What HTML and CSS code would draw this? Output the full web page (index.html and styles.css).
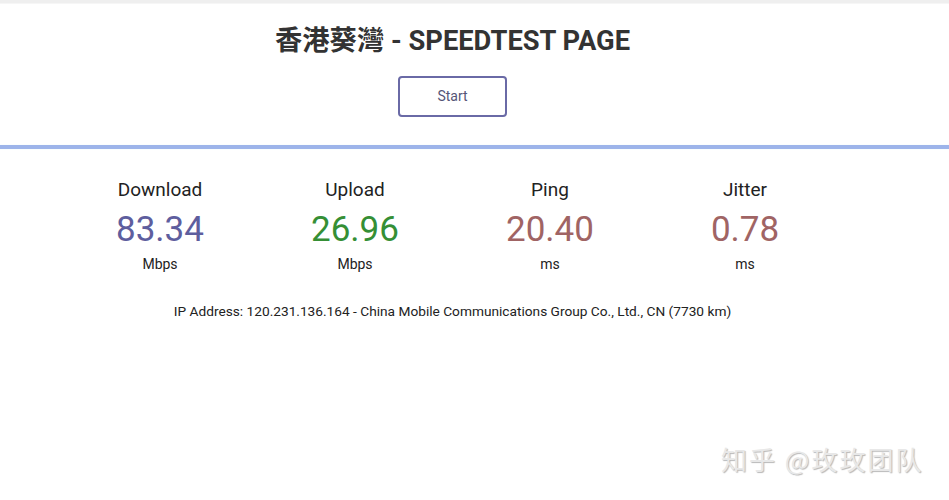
FILE: index.html
```html
<!DOCTYPE html>
<html lang="zh">
<head>
<meta charset="utf-8">
<title>Speedtest</title>
<link rel="stylesheet" href="styles.css">
</head>
<body>
<div class="topbar"></div>
<header class="header">
  <h1 class="title">香港葵灣 - SPEEDTEST PAGE</h1>
  <button class="start">Start</button>
</header>
<div class="divider"></div>
<main class="results">
  <div class="stats">
    <div class="stat">
      <div class="label">Download</div>
      <div class="value dl">83.34</div>
      <div class="unit">Mbps</div>
    </div>
    <div class="stat">
      <div class="label">Upload</div>
      <div class="value ul">26.96</div>
      <div class="unit">Mbps</div>
    </div>
    <div class="stat">
      <div class="label">Ping</div>
      <div class="value ping">20.40</div>
      <div class="unit">ms</div>
    </div>
    <div class="stat">
      <div class="label">Jitter</div>
      <div class="value jit">0.78</div>
      <div class="unit">ms</div>
    </div>
  </div>
  <p class="ip">IP Address: 120.231.136.164 - China Mobile Communications Group Co., Ltd., CN (7730 km)</p>
</main>
<div class="watermark">知乎 @玫玫团队</div>
</body>
</html>
```
FILE: styles.css
```css
html, body {
  margin: 0;
  padding: 0;
  background: #ffffff;
}
body {
  width: 949px;
  height: 500px;
  overflow: hidden;
  position: relative;
  font-family: Roboto, "Noto Sans CJK TC", sans-serif;
  color: #202020;
}
.topbar {
  height: 3px;
  background: #efefef;
  border-bottom: 1px solid #f6f6f6;
}
.header {
  width: 905px;
  display: flex;
  flex-direction: column;
  align-items: center;
  padding-top: 21px;
}
.title {
  margin: 0;
  font-size: 27.3px;
  font-weight: 700;
  color: #333333;
  line-height: 32px;
  font-family: Roboto, "Noto Sans CJK TC", sans-serif;
}
.start {
  margin-top: 19px;
  width: 109px;
  height: 41px;
  border: 2px solid #6a6aa6;
  border-radius: 4px;
  background: #ffffff;
  color: #555577;
  font-family: Roboto, sans-serif;
  font-size: 14px;
  padding: 0 0 2px;
}
.divider {
  margin-top: 28px;
  height: 4px;
  background: #9db4ea;
  box-shadow: 0 0 1px #c8f0f4;
}
.results {
  width: 905px;
  display: flex;
  flex-direction: column;
  align-items: center;
}
.stats {
  display: flex;
  margin-top: 30px;
}
.stat {
  width: 195px;
  display: flex;
  flex-direction: column;
  align-items: center;
}
.label {
  font-size: 19px;
  line-height: 22px;
  color: #222222;
}
.value {
  font-size: 35px;
  line-height: 40px;
  margin-top: 9px;
}
.dl { color: #5e5e9e; }
.ul { color: #358f35; }
.ping { color: #a06464; }
.jit { color: #a06464; }
.unit {
  margin-top: 5px;
  font-size: 14px;
  line-height: 18px;
  color: #222222;
}
.ip {
  margin: 29px 0 0;
  font-size: 13.7px;
  line-height: 18px;
  color: #222222;
}
.watermark {
  position: absolute;
  left: 721px;
  top: 442px;
  font-family: "Noto Sans CJK SC", sans-serif;
  font-size: 26px;
  letter-spacing: 2px;
  line-height: 34px;
  color: #e8e8e8;
  text-shadow: 1px 1px 1px #b8b8b8;
}
```
